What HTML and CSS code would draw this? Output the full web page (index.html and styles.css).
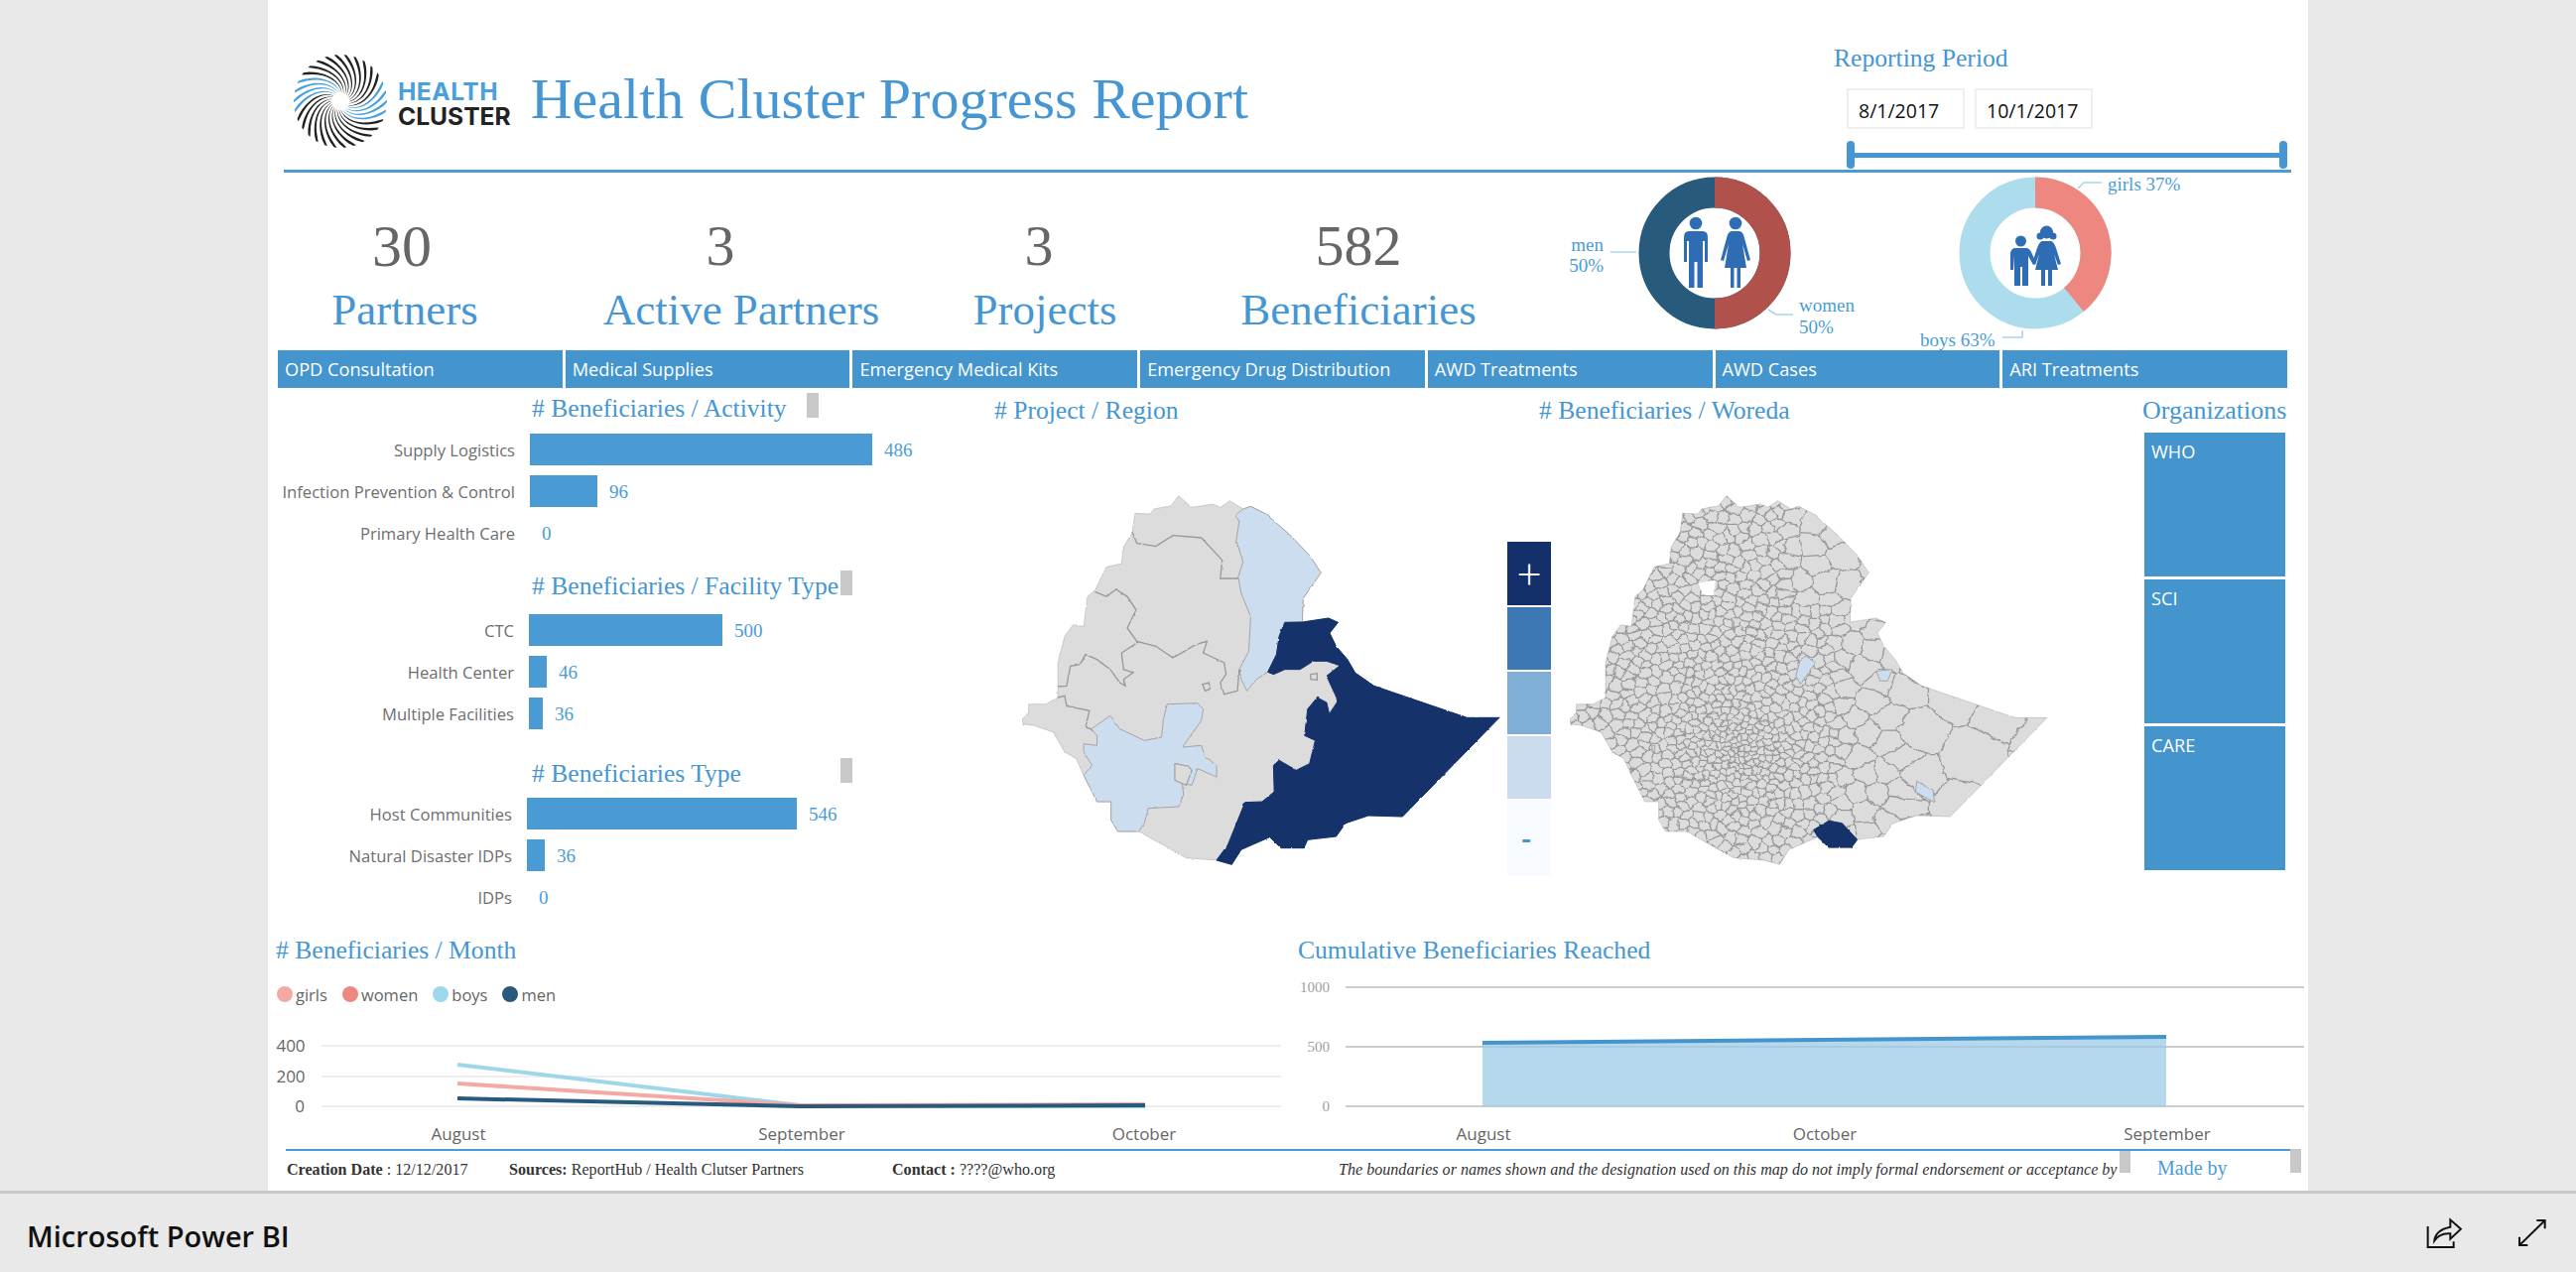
FILE: index.html
```html
<!DOCTYPE html>
<html lang="en">

<head>
    <meta charset="UTF-8">
    <title>Health Cluster Progress Report</title>
    <link rel="stylesheet" href="styles.css">
</head>

<body>
    <div class="report">
        <!-- Header -->
        <div class="header">
            <svg class="swirl" viewBox="0 0 96 96" id="swirl"></svg>
            <div class="logoText"><span class="logoHealth">HEALTH</span><span class="logoCluster">CLUSTER</span></div>
            <h1 class="pageTitle">Health Cluster Progress Report</h1>
            <div class="period">
                <div class="periodTitle">Reporting Period</div>
                <div class="dates">
                    <div class="dateBox">8/1/2017</div>
                    <div class="dateBox">10/1/2017</div>
                </div>
                <div class="slider"><span class="handle"></span><span class="track"></span><span class="handle"></span></div>
            </div>
        </div>

        <!-- KPI cards and gender donuts -->
        <div class="kpiRow">
            <div class="kpi kpi1"><div class="kpiNum">30</div><div class="kpiLabel">Partners</div></div>
            <div class="kpi kpi2"><div class="kpiNum">3</div><div class="kpiLabel">Active Partners</div></div>
            <div class="kpi kpi3"><div class="kpiNum">3</div><div class="kpiLabel">Projects</div></div>
            <div class="kpi kpi4"><div class="kpiNum">582</div><div class="kpiLabel">Beneficiaries</div></div>
            <svg class="donuts" viewBox="1580 174 746 179">
                <circle cx="1728" cy="255" r="61" class="ring" stroke="#285a7b" />
                <path d="M1728 194 A61 61 0 0 1 1728 316" class="ring" stroke="#b0524b" />
                <circle cx="2051" cy="255" r="61" class="ring" stroke="#addcec" />
                <path d="M2051 194 A61 61 0 0 1 2090 302" class="ring" stroke="#ee8780" />

                <g class="figure">
                    <circle cx="1709" cy="225" r="6.3" />
                    <path d="M1702 233 H1716 Q1721 233 1721 239 V264 H1718 V243 H1716 V290 H1710.5 V264 H1707.5 V290 H1702 V243 H1700 V264 H1697 V239 Q1697 233 1702 233Z" />
                    <circle cx="1749" cy="225" r="6.3" />
                    <path d="M1745 233 H1753 Q1757 234 1758 240 L1764 262 L1761 263 L1756 246 L1760 270 H1754 V290 H1750.5 V270 H1747.5 V290 H1744 V270 H1738 L1742 246 L1737 263 L1734 262 L1740 240 Q1741 234 1745 233Z" />

                    <circle cx="2036.5" cy="243" r="5.5" />
                    <path d="M2031 250 H2042 Q2045 250 2047 254 L2052 265 L2049 267 L2044 258 V288 H2038 V269 H2036 V288 H2030 V258 L2029 272 H2026 V255 Q2027 250 2031 250Z" />
                    <circle cx="2062.5" cy="234" r="6.5" />
                    <circle cx="2056" cy="238" r="3.5" />
                    <circle cx="2069" cy="238" r="3.5" />
                    <path d="M2058 243 H2067 Q2070 244 2072 250 L2077 266 L2074 267 L2070 256 L2074 272 H2068 V288 H2064 V272 H2061 V288 H2057 V272 H2051 L2055 256 L2051 267 L2048 265 L2053 250 Q2055 244 2058 243Z" />
                </g>

                <g class="leader">
                    <path d="M1623 254 H1649" />
                    <path d="M1782 312 L1790 317 H1807" />
                    <path d="M2094 190 L2100 184 H2118" />
                    <path d="M2018 340 H2038 V333" />
                </g>
                <text x="1616" y="253" text-anchor="end" class="donutText">men</text>
                <text x="1616" y="274" text-anchor="end" class="donutText">50%</text>
                <text x="1813" y="314" class="donutText">women</text>
                <text x="1813" y="336" class="donutText">50%</text>
                <text x="2124" y="192" class="donutText">girls 37%</text>
                <text x="1935" y="349" class="donutText">boys 63%</text>
            </svg>
        </div>

        <!-- Indicator tabs -->
        <div class="tabs">
            <div class="tab">OPD Consultation</div>
            <div class="tab">Medical Supplies</div>
            <div class="tab">Emergency Medical Kits</div>
            <div class="tab">Emergency Drug Distribution</div>
            <div class="tab">AWD Treatments</div>
            <div class="tab">AWD Cases</div>
            <div class="tab">ARI Treatments</div>
        </div>

        <div class="mainRow">
            <!-- Bar charts -->
            <div class="barsCol">
                <div class="barGroup groupActivity">
                    <div class="barTitle"><span># Beneficiaries / Activity</span><i class="stub"></i></div>
                    <div class="barRow"><div class="barLabel">Supply Logistics</div><div class="bar" style="width:345px"></div><div class="barValue">486</div></div>
                    <div class="barRow"><div class="barLabel">Infection Prevention &amp; Control</div><div class="bar" style="width:68px"></div><div class="barValue">96</div></div>
                    <div class="barRow"><div class="barLabel">Primary Health Care</div><div class="bar" style="width:0"></div><div class="barValue">0</div></div>
                </div>
                <div class="barGroup groupFacility">
                    <div class="barTitle"><span># Beneficiaries / Facility Type</span><i class="stub"></i></div>
                    <div class="barRow"><div class="barLabel">CTC</div><div class="bar" style="width:195px"></div><div class="barValue">500</div></div>
                    <div class="barRow"><div class="barLabel">Health Center</div><div class="bar" style="width:18px"></div><div class="barValue">46</div></div>
                    <div class="barRow"><div class="barLabel">Multiple Facilities</div><div class="bar" style="width:14px"></div><div class="barValue">36</div></div>
                </div>
                <div class="barGroup groupType">
                    <div class="barTitle"><span># Beneficiaries Type</span><i class="stub"></i></div>
                    <div class="barRow"><div class="barLabel">Host Communities</div><div class="bar" style="width:272px"></div><div class="barValue">546</div></div>
                    <div class="barRow"><div class="barLabel">Natural Disaster IDPs</div><div class="bar" style="width:18px"></div><div class="barValue">36</div></div>
                    <div class="barRow"><div class="barLabel">IDPs</div><div class="bar" style="width:0"></div><div class="barValue">0</div></div>
                </div>
            </div>

            <!-- Maps -->
            <div class="mapsCol">
                <div class="mapTitles">
                    <div class="mapTitle titleRegion"># Project / Region</div>
                    <div class="mapTitle titleWoreda"># Beneficiaries / Woreda</div>
                </div>
                <div class="maps">
                    <svg class="map" viewBox="78 75 1328 1170" preserveAspectRatio="none">
                        <defs>
                            <filter id="rough" x="-5%" y="-5%" width="110%" height="110%">
                                <feTurbulence type="fractalNoise" baseFrequency="0.06" numOctaves="2" seed="4" />
                                <feDisplacementMap in="SourceGraphic" scale="6" xChannelSelector="R" yChannelSelector="G" />
                            </filter>
                            <filter id="wavy" x="-5%" y="-5%" width="110%" height="110%">
                                <feTurbulence type="fractalNoise" baseFrequency="0.04" numOctaves="2" seed="8" />
                                <feDisplacementMap in="SourceGraphic" scale="18" xChannelSelector="R" yChannelSelector="G" />
                            </filter>
                            <path id="eth" d="M540 95 L575 130 L630 120 L650 130 L675 110 L710 135 L730 127 L770 150 L830 210 L885 275 L915 328 L868 405 L866 477 L935 465 L960 478 L938 510 L955 550 L985 590 L1005 630 L1055 670 L1300 766 L1385 766 L1130 1065 L1040 1062 L980 1085 L955 1125 L880 1135 L870 1160 L810 1160 L780 1127 L705 1165 L680 1210 L640 1197 L560 1190 L435 1110 L380 1110 L362 1075 L362 1020 L325 1020 L290 940 L270 890 L240 870 L210 810 L160 790 L130 785 L128 770 L145 750 L145 725 L190 725 L222 705 L222 600 L240 520 L262 485 L290 490 L300 400 L320 380 L350 310 L390 300 L395 250 L418 205 L425 148 L465 150 L475 135 L520 125Z" />
                            <clipPath id="ethClip"><use href="#eth" /></clipPath>
                        </defs>
                        <g filter="url(#rough)" class="regions">
                            <use href="#eth" class="land" />
                            <path class="light" d="M710 135 L730 127 L770 150 L830 210 L885 275 L915 328 L868 405 L866 477 L820 478 L805 520 L798 575 L775 628 L745 650 L720 685 L705 650 L700 620 L725 565 L730 460 L705 390 L697 340 L710 295 L692 230 L700 170 L688 155Z" />
                            <path class="dark" d="M820 478 L866 477 L935 465 L960 478 L938 510 L955 550 L985 590 L1005 630 L1055 670 L1300 766 L1385 766 L1130 1065 L1040 1062 L980 1085 L955 1125 L880 1135 L870 1160 L810 1160 L780 1127 L705 1165 L680 1210 L640 1197 L670 1150 L715 1022 L760 1020 L792 990 L790 910 L805 895 L850 925 L885 905 L900 835 L872 820 L880 740 L905 705 L930 720 L937 755 L960 715 L930 640 L965 608 L930 595 L895 595 L860 620 L820 620 L790 635 L775 628 L798 575 L805 520Z" />
                            <path class="light" d="M310 800 L360 760 L385 800 L450 835 L495 825 L500 770 L510 725 L590 722 L605 740 L600 775 L550 855 L600 850 L610 885 L640 910 L640 945 L590 920 L575 970 L550 965 L553 1000 L540 1035 L460 1040 L450 1085 L435 1110 L380 1110 L362 1075 L362 1020 L325 1020 L290 940 L312 910 L290 870 L290 845 L325 850 L325 820Z" />
                            <path class="land" d="M530 905 L565 912 L575 925 L560 970 L530 955Z" />
                            <path class="border" d="M418 205 L430 238 L480 248 L525 215 L600 222 L635 265 L655 290 L650 345 L697 345" />
                            <path class="border" d="M320 385 L350 400 L375 378 L405 400 L428 440 L405 495 L430 535 L480 550 L525 585 L585 545 L615 535 L605 570 L660 600 L665 635 L650 660 L660 695 L695 685 L700 620" />
                            <path class="border" d="M430 540 L390 570 L395 620 L420 630 L395 650 L400 670 L385 660 L360 620 L325 590 L295 575 L280 605 L255 610 L245 670 L222 672" />
                            <path class="border" d="M222 705 L240 700 L245 730 L305 745 L295 795 L310 800" />
                            <path class="border" d="M603 665 L620 660 L622 680 L610 685Z M888 635 L905 632 L905 652 L888 650Z" />
                        </g>
                    </svg>

                    <div class="legend">
                        <div class="step step1">+</div>
                        <div class="step step2"></div>
                        <div class="step step3"></div>
                        <div class="step step4"></div>
                        <div class="step step5">-</div>
                    </div>

                    <svg class="map" viewBox="78 75 1328 1170" preserveAspectRatio="none">
                        <use href="#eth" class="land" filter="url(#rough)" />
                        <g clip-path="url(#ethClip)">
                            <path id="woredas" class="mesh" filter="url(#wavy)" />
                        </g>
                        <g class="regions" filter="url(#rough)">
                            <path class="blank" d="M468 360 L510 352 L505 395 L480 395Z" />
                            <path class="light" d="M750 580 L775 600 L750 640 L735 665 L723 640 L735 590Z" />
                            <path class="light" d="M935 625 L978 620 L965 655 L945 655Z" />
                            <path class="light" d="M1042 958 L1085 985 L1088 1022 L1038 990Z" />
                            <path class="light" d="M344 850 L352 850 L350 870 L345 868Z" />
                            <path class="dark" d="M770 1105 L810 1078 L845 1085 L885 1135 L870 1158 L810 1158 L780 1125Z" />
                        </g>
                    </svg>
                </div>
            </div>

            <!-- Organizations -->
            <div class="orgsCol">
                <div class="orgsTitle">Organizations</div>
                <div class="org">WHO</div>
                <div class="org">SCI</div>
                <div class="org">CARE</div>
            </div>
        </div>

        <!-- Trend charts -->
        <div class="chartsRow">
            <div class="chartPanel">
                <div class="chartTitle"># Beneficiaries / Month</div>
                <div class="chartLegend">
                    <span class="legendItem"><i class="dot dotGirls"></i>girls</span>
                    <span class="legendItem"><i class="dot dotWomen"></i>women</span>
                    <span class="legendItem"><i class="dot dotBoys"></i>boys</span>
                    <span class="legendItem"><i class="dot dotMen"></i>men</span>
                </div>
                <svg class="monthChart" viewBox="270 1040 1030 118">
                    <path class="gridLight" d="M324 1054 H1291 M324 1085 H1291 M324 1115 H1291" />
                    <text x="293" y="1060" text-anchor="middle" class="axisText">400</text>
                    <text x="293" y="1091" text-anchor="middle" class="axisText">200</text>
                    <text x="302" y="1121" text-anchor="middle" class="axisText">0</text>
                    <polyline class="series" stroke="#9ed6ea" points="461,1073 806,1114 1154,1115" />
                    <polyline class="series" stroke="#f4a9a4" points="461,1092 806,1114 1154,1113" />
                    <polyline class="series" stroke="#285a7b" points="461,1107 806,1115 1154,1114" />
                    <text x="462" y="1149" text-anchor="middle" class="axisText">August</text>
                    <text x="808" y="1149" text-anchor="middle" class="axisText">September</text>
                    <text x="1153" y="1149" text-anchor="middle" class="axisText">October</text>
                </svg>
            </div>
            <div class="chartPanel">
                <div class="chartTitle">Cumulative Beneficiaries Reached</div>
                <svg class="cumChart" viewBox="1300 985 1026 173">
                    <path class="gridDark" d="M1356 995 H2322 M1356 1055 H2322 M1356 1115 H2322" />
                    <text x="1340" y="1000" text-anchor="end" class="axisSerif">1000</text>
                    <text x="1340" y="1060" text-anchor="end" class="axisSerif">500</text>
                    <text x="1340" y="1120" text-anchor="end" class="axisSerif">0</text>
                    <path class="area" d="M1494 1051 L2183 1045 V1115 H1494Z" />
                    <path class="areaLine" d="M1494 1051 L2183 1045" />
                    <text x="1495" y="1149" text-anchor="middle" class="axisText">August</text>
                    <text x="1839" y="1149" text-anchor="middle" class="axisText">October</text>
                    <text x="2184" y="1149" text-anchor="middle" class="axisText">September</text>
                </svg>
            </div>
        </div>

        <!-- Report footer -->
        <div class="footer">
            <div class="footCreated"><b>Creation Date</b> : 12/12/2017</div>
            <div class="footSources"><b>Sources:</b> ReportHub / Health Clutser Partners</div>
            <div class="footContact"><b>Contact :</b> ????@who.org</div>
            <div class="footNote">The boundaries or names shown and the designation used on this map do not imply formal endorsement or acceptance by</div>
            <i class="stub footStub"></i>
            <div class="madeBy">Made by</div>
            <i class="stub footStub"></i>
        </div>
    </div>

    <!-- Power BI embed bar -->
    <div class="biBar">
        <div class="biName">Microsoft Power BI</div>
        <div class="biIcons">
            <svg class="iconShare" viewBox="45 35 108 96">
                <path d="M50 62 V125 H128 V108" />
                <path d="M70 105 C72 85 88 70 118 64 V42 L150 70 L118 100 V84 C100 82 82 88 70 105Z" />
            </svg>
            <svg class="iconExpand" viewBox="322 44 90 87">
                <path d="M328 125 L405 50" />
                <path d="M380 50 H405 V75" />
                <path d="M328 100 V125 H353" />
            </svg>
        </div>
    </div>

    <script src="charts.js"></script>
</body>

</html>
```

FILE: styles.css
```css
* {
    box-sizing: border-box;
}

body {
    margin: 0;
    width: 2596px;
    height: 1282px;
    overflow: hidden;
    background-color: #e9e9e9;
    font-family: "Open Sans", sans-serif;
}

.report {
    width: 2056px;
    height: 1200px;
    margin: 0 auto;
    background-color: #fff;
}

/* Header */
.header {
    display: flex;
    align-items: flex-start;
    height: 174px;
    margin: 0 17px 0 16px;
    padding-left: 9px;
    border-bottom: 3px solid #4b9cd6;
}

.swirl {
    width: 96px;
    height: 96px;
    margin-top: 54px;
}

.logoText {
    display: flex;
    flex-direction: column;
    margin: 80px 0 0 10px;
    font-family: "Inter", sans-serif;
    font-weight: 700;
    font-size: 24.6px;
    line-height: 25px;
}

.logoHealth {
    color: #4ba0dc;
    letter-spacing: 0.5px;
}

.logoCluster {
    color: #222;
}

.pageTitle {
    margin: 62px 0 0 20px;
    font-family: "Liberation Serif", serif;
    font-weight: 400;
    font-size: 58px;
    line-height: 76px;
    color: #4596d2;
}

.period {
    width: 461px;
    margin-left: auto;
    padding-top: 43px;
}

.periodTitle {
    font-family: "Liberation Serif", serif;
    font-size: 25.6px;
    line-height: 32px;
    color: #4596d2;
}

.dates {
    display: flex;
    gap: 10px;
    margin: 14px 0 12px 13px;
}

.dateBox {
    width: 119px;
    height: 41px;
    padding-left: 10px;
    border: 2px solid #efefef;
    font-size: 19.5px;
    line-height: 41px;
    color: #111;
}

.slider {
    display: flex;
    align-items: center;
    width: 444px;
    margin-left: 13px;
}

.handle {
    width: 8px;
    height: 28px;
    border-radius: 4px;
    background-color: #4596d2;
}

.track {
    flex: 1;
    height: 5px;
    background-color: #4596d2;
}

/* KPI row */
.kpiRow {
    display: flex;
    height: 179px;
}

.kpi {
    padding-top: 44px;
    text-align: center;
    font-family: "Liberation Serif", serif;
}

.kpi1 {
    width: 276px;
}

.kpi2 {
    width: 402px;
}

.kpi3 {
    width: 210px;
}

.kpi4 {
    width: 422px;
}

.kpiNum {
    font-size: 58px;
    line-height: 60px;
    color: #666;
}

.kpi1 .kpiNum {
    margin-right: 6px;
    font-size: 60px;
}

.kpi2 .kpiNum {
    margin-right: 42px;
}

.kpi3 .kpiNum {
    margin-right: 12px;
}

.kpiLabel {
    margin-top: 3px;
    font-size: 45px;
    line-height: 62px;
    color: #4596d2;
    white-space: nowrap;
}

.donuts {
    width: 746px;
    height: 179px;
}

.ring {
    fill: none;
    stroke-width: 31;
}

.figure {
    fill: #2e6db4;
}

.leader {
    fill: none;
    stroke: #a7d5ec;
    stroke-width: 1.5;
}

.donutText {
    font-family: "Liberation Serif", serif;
    font-size: 19px;
    fill: #4b9cd6;
}

/* Tabs */
.tabs {
    display: grid;
    grid-template-columns: repeat(7, 1fr);
    gap: 3px;
    height: 37px;
    margin: 0 21px 0 10px;
}

.tab {
    padding-left: 7px;
    background-color: #4495ce;
    color: #fff;
    font-size: 18.2px;
    line-height: 38px;
    white-space: nowrap;
}

/* Main row */
.mainRow {
    display: flex;
    height: 550px;
}

.barsCol {
    width: 740px;
    padding-top: 7px;
}

.barGroup {
    display: flex;
    flex-direction: column;
    gap: 10px;
}

.groupFacility {
    margin-top: 23px;
    margin-left: -1px;
}

.groupType {
    margin-top: 30px;
    margin-left: -3px;
}

.barTitle {
    display: flex;
    justify-content: space-between;
    align-items: flex-start;
    width: 289px;
    height: 30px;
    margin-left: 266px;
    font-family: "Liberation Serif", serif;
    font-size: 25.6px;
    line-height: 30px;
    color: #4596d2;
    white-space: nowrap;
}

.groupFacility .barTitle {
    width: 323px;
    margin-left: 267px;
    margin-bottom: 3px;
}

.groupType .barTitle {
    width: 323px;
    margin-left: 269px;
    margin-bottom: -1px;
}

.stub {
    display: block;
    flex: none;
    width: 12px;
    height: 25px;
    margin-top: -1px;
    background-color: #c8c8c8;
}

.barRow {
    display: flex;
    align-items: center;
    height: 32px;
}

.barLabel {
    width: 249px;
    margin-right: 15px;
    text-align: right;
    font-size: 16.6px;
    color: #6e6e6e;
    white-space: nowrap;
}

.bar {
    height: 32px;
    background-color: #4a9bd3;
}

.barValue {
    margin: 2px 0 0 12px;
    font-family: "Liberation Serif", serif;
    font-size: 19px;
    color: #4b9cd6;
}

.mapsCol {
    width: 1130px;
}

.mapTitles {
    display: flex;
    height: 48px;
    font-family: "Liberation Serif", serif;
    font-size: 25.6px;
    line-height: 48px;
    color: #4596d2;
}

.titleRegion {
    width: 549px;
    margin-left: -8px;
}

.maps {
    display: flex;
    align-items: flex-end;
    width: 1060px;
    height: 447px;
    margin-left: 1px;
}

.map {
    width: 508px;
    height: 390px;
    margin-bottom: 2px;
}

.land {
    fill: #dcdcdc;
    stroke: #a5a5a5;
    stroke-width: 1.3px;
    vector-effect: non-scaling-stroke;
}

.light,
.dark,
.blank {
    stroke: #a5a5a5;
    stroke-width: 1px;
    vector-effect: non-scaling-stroke;
}

.light {
    fill: #cbddee;
}

.dark {
    fill: #13306a;
    stroke: #13306a;
}

.blank {
    fill: #fff;
    stroke: #fff;
}

.border,
.mesh {
    fill: none;
    stroke: #989898;
    stroke-width: 1.3px;
    vector-effect: non-scaling-stroke;
}

.legend {
    display: flex;
    flex: none;
    flex-direction: column;
    gap: 2px;
    width: 44px;
    height: 337px;
    margin-bottom: 2px;
}

.step {
    flex: 1;
    text-align: center;
}

.step1 {
    background-color: #13306a;
    color: #fff;
    font-size: 44px;
    font-weight: 300;
    line-height: 64px;
}

.step2 {
    background-color: #3d78b5;
}

.step3 {
    background-color: #7fafd4;
}

.step4 {
    background-color: #cbdcee;
}

.step5 {
    padding-right: 6px;
    background-color: #f7fafe;
    color: #4495ce;
    font-size: 30px;
    font-weight: 600;
    line-height: 76px;
}

.orgsCol {
    display: flex;
    flex-direction: column;
    gap: 3px;
    width: 142px;
    margin-left: 21px;
}

.orgsTitle {
    height: 43px;
    margin-left: -2px;
    font-family: "Liberation Serif", serif;
    font-size: 26px;
    line-height: 48px;
    color: #4596d2;
    white-space: nowrap;
}

.org {
    height: 145px;
    padding: 7px 7px;
    background-color: #4495ce;
    color: #fff;
    font-size: 18.2px;
}

/* Charts */
.chartsRow {
    display: flex;
    height: 218px;
}

.chartPanel:first-child {
    width: 1030px;
}

.chartPanel:last-child {
    width: 1026px;
}

.chartTitle {
    height: 45px;
    padding-left: 8px;
    font-family: "Liberation Serif", serif;
    font-size: 25.6px;
    line-height: 36px;
    color: #4596d2;
}

.chartLegend {
    display: flex;
    align-items: center;
    gap: 15px;
    height: 55px;
    padding-left: 9px;
    padding-bottom: 21px;
    font-size: 16.5px;
    color: #666;
}

.legendItem {
    display: flex;
    align-items: center;
    gap: 3px;
}

.dot {
    width: 16px;
    height: 16px;
    border-radius: 50%;
}

.dotGirls {
    background-color: #f4a9a4;
}

.dotWomen {
    background-color: #ee8780;
}

.dotBoys {
    background-color: #9ed6ea;
}

.dotMen {
    background-color: #285a7b;
}

.monthChart {
    display: block;
    width: 1030px;
    height: 118px;
}

.cumChart {
    display: block;
    width: 1026px;
    height: 173px;
}

.gridLight,
.gridDark {
    fill: none;
    stroke-width: 2;
}

.gridLight {
    stroke: #eeeeee;
}

.gridDark {
    stroke: #cccccc;
}

.axisText {
    font-family: "Open Sans", sans-serif;
    font-size: 17px;
    fill: #666;
}

.axisSerif {
    font-family: "Liberation Serif", serif;
    font-size: 15px;
    fill: #a0a0a0;
}

.series {
    fill: none;
    stroke-width: 4;
}

.area {
    fill: #9ccbe6;
    opacity: 0.75;
}

.areaLine {
    fill: none;
    stroke: #4495ce;
    stroke-width: 4;
}

/* Footer */
.footer {
    position: relative;
    display: flex;
    height: 42px;
    margin-left: 18px;
    font-family: "Liberation Serif", serif;
    font-size: 16.1px;
    line-height: 42px;
    color: #333;
}

.footer::before {
    content: "";
    position: absolute;
    top: 0;
    left: 0;
    width: 2020px;
    height: 2px;
    background-color: #4b9cd6;
}

.footCreated {
    width: 225px;
    padding-left: 1px;
}

.footSources {
    width: 386px;
}

.footContact {
    width: 450px;
}

.footNote {
    width: 787px;
    font-style: italic;
    white-space: nowrap;
}

.footStub {
    width: 11px;
    height: 24px;
    margin-top: 0;
}

.madeBy {
    width: 161px;
    padding-left: 27px;
    font-size: 20px;
    line-height: 38px;
    color: #4b9cd6;
}

/* Power BI bar */
.biBar {
    display: flex;
    justify-content: space-between;
    align-items: center;
    height: 82px;
    padding: 0 29px 0 27px;
    border-top: 3px solid #c8c8c8;
}

.biName {
    margin-top: 6px;
    font-size: 29px;
    font-weight: 600;
    color: #111;
}

.biIcons {
    display: flex;
    align-items: center;
    gap: 56px;
}

.iconShare,
.iconExpand {
    fill: none;
    stroke: #111;
    stroke-width: 6;
}

.iconShare {
    width: 36px;
    height: 32px;
}

.iconExpand {
    width: 30px;
    height: 29px;
}
```

FILE: charts.js
```js
// small seeded generator so the map and logo come out the same on every load
let seed = 20171212;
function rnd() {
    seed = (seed * 1664525 + 1013904223) % 4294967296;
    return seed / 4294967296;
}

function bump(x, y, cx, cy, size) {
    let d = (x - cx) * (x - cx) + (y - cy) * (y - cy);
    return Math.exp(-d / (2 * size * size));
}

// woredas are tighter in the centre and huge in the east
function spacing(x, y) {
    let s = x > 1010 ? 115 : x > 830 ? 52 : 25;
    if (x > 700 && y < 440) s = 58;
    s *= 1 - 0.5 * bump(x, y, 570, 870, 130);
    s *= 1 - 0.2 * bump(x, y, 510, 540, 150);
    return s;
}

function makeSeeds() {
    let pts = [];
    for (let i = 0; i < 40000; i++) {
        let x = 100 + rnd() * 1300;
        let y = 80 + rnd() * 1150;
        let s = spacing(x, y);
        let ok = true;
        for (let p of pts) {
            let m = Math.min(s, p.s);
            if ((p.x - x) * (p.x - x) + (p.y - y) * (p.y - y) < m * m) {
                ok = false;
                break;
            }
        }
        if (ok) pts.push({ x: x, y: y, s: s });
    }
    return pts;
}

// cut a polygon with the half plane closer to p than to q
function clip(poly, p, q) {
    let mx = (p.x + q.x) / 2, my = (p.y + q.y) / 2;
    let nx = q.x - p.x, ny = q.y - p.y;
    let out = [];
    for (let i = 0; i < poly.length; i++) {
        let a = poly[i], b = poly[(i + 1) % poly.length];
        let da = (a[0] - mx) * nx + (a[1] - my) * ny;
        let db = (b[0] - mx) * nx + (b[1] - my) * ny;
        if (da <= 0) out.push(a);
        if (da * db < 0) {
            let t = da / (da - db);
            out.push([a[0] + (b[0] - a[0]) * t, a[1] + (b[1] - a[1]) * t]);
        }
    }
    return out;
}

function drawWoredas() {
    let pts = makeSeeds();
    let d = "";
    for (let p of pts) {
        let near = pts.filter(q => q !== p)
            .sort((a, b) => Math.hypot(a.x - p.x, a.y - p.y) - Math.hypot(b.x - p.x, b.y - p.y))
            .slice(0, 24);
        let poly = [[0, 0], [1500, 0], [1500, 1300], [0, 1300]];
        for (let q of near) poly = clip(poly, p, q);
        if (poly.length > 2) {
            d += "M" + poly.map(v => v[0].toFixed(1) + " " + v[1].toFixed(1)).join("L") + "Z";
        }
    }
    document.getElementById("woredas").setAttribute("d", d);
}

function drawSwirl() {
    let count = 30, inner = 9, outer = 47, turn = 1.1;
    let html = "";
    for (let i = 0; i < count; i++) {
        let tip = i / count * Math.PI * 2;
        let deg = tip * 180 / Math.PI;
        let blue = (deg > 166 && deg < 216) || deg > 326 || deg < 20;
        let left = [], right = [];
        for (let k = 0; k <= 10; k++) {
            let f = k / 10;
            let r = inner + (outer - inner) * f;
            let a = tip + turn * (1 - f) * (1 - f * 0.3);
            // blades are hairlines at the hub and about 4px wide near the rim
            let px = (0.25 + 3.6 * f) * (f > 0.9 ? 0.7 : 1);
            let w = px / r;
            left.push([48 + r * Math.cos(a - w / 2), 48 + r * Math.sin(a - w / 2)]);
            right.unshift([48 + r * Math.cos(a + w / 2), 48 + r * Math.sin(a + w / 2)]);
        }
        let d = left.concat(right).map(v => v[0].toFixed(2) + "," + v[1].toFixed(2)).join(" ");
        html += '<polygon points="' + d + '" fill="' + (blue ? "#4ba0dc" : "#222") + '"/>';
    }
    document.getElementById("swirl").innerHTML = html;
}

drawWoredas();
drawSwirl();
```
